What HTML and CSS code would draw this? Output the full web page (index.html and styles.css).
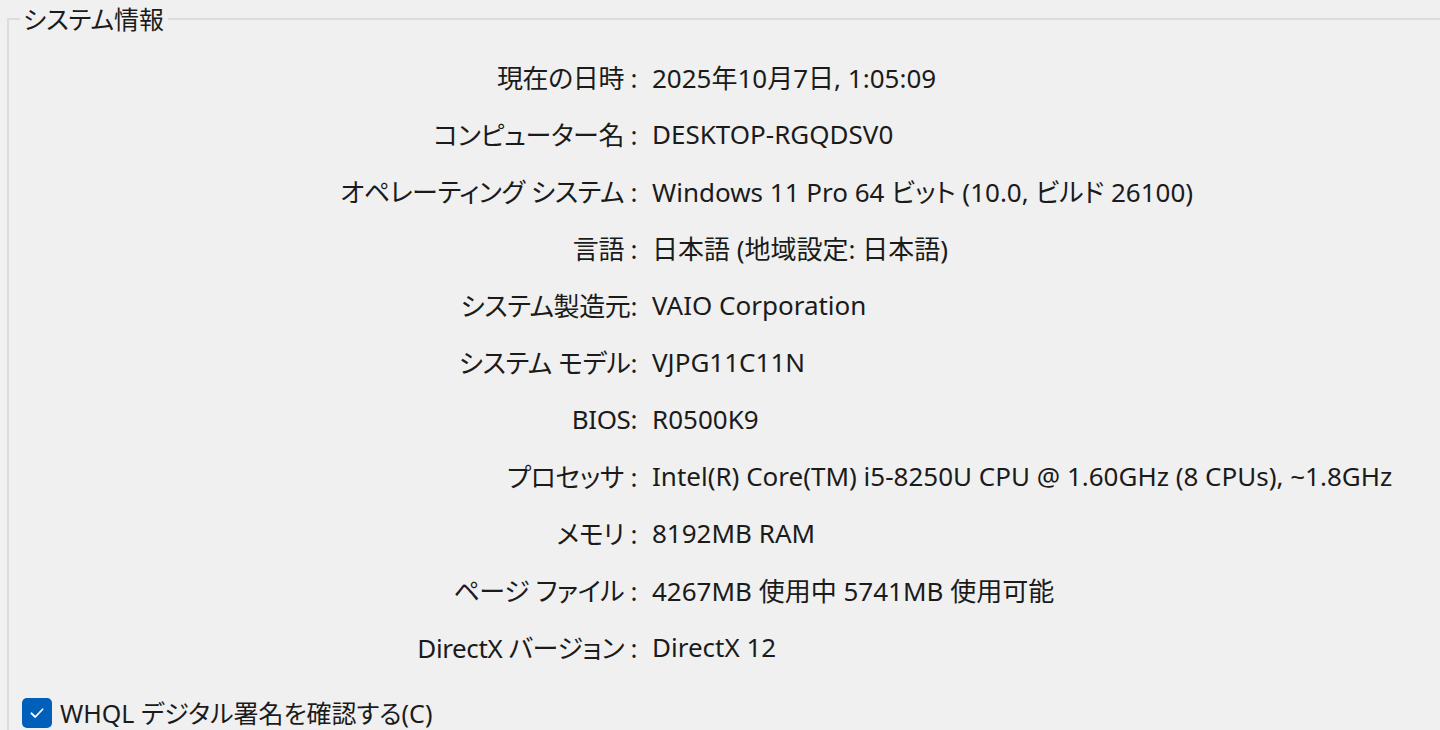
FILE: index.html
```html
<!DOCTYPE html>
<html lang="ja">
<head>
    <meta charset="UTF-8">
    <meta name="viewport" content="width=device-width, initial-scale=1.0">
    <title>システム情報</title>
    <link rel="stylesheet" href="styles.css">
</head>
<body>
    <fieldset class="sys-group">
        <legend class="sys-legend">システム情報</legend>
        <div class="info-grid">
            <div class="info-label">現在の日時 :</div>
            <div class="info-value">2025年10月7日, 1:05:09</div>

            <div class="info-label">コンピューター名 :</div>
            <div class="info-value">DESKTOP-RGQDSV0</div>

            <div class="info-label">オペレーティング システム :</div>
            <div class="info-value">Windows 11 Pro 64 ビット (10.0, ビルド 26100)</div>

            <div class="info-label">言語 :</div>
            <div class="info-value">日本語 (地域設定: 日本語)</div>

            <div class="info-label">システム製造元:</div>
            <div class="info-value">VAIO Corporation</div>

            <div class="info-label">システム モデル:</div>
            <div class="info-value">VJPG11C11N</div>

            <div class="info-label">BIOS:</div>
            <div class="info-value">R0500K9</div>

            <div class="info-label">プロセッサ :</div>
            <div class="info-value">Intel(R) Core(TM) i5-8250U CPU @ 1.60GHz (8 CPUs), ~1.8GHz</div>

            <div class="info-label">メモリ :</div>
            <div class="info-value">8192MB RAM</div>

            <div class="info-label">ページ ファイル :</div>
            <div class="info-value">4267MB 使用中 5741MB 使用可能</div>

            <div class="info-label">DirectX バージョン :</div>
            <div class="info-value">DirectX 12</div>
        </div>

        <label class="whql-check">
            <span class="check-box">
                <svg width="16" height="16" viewBox="0 0 16 16"><path d="M3.5 8.2 L6.6 11.2 L12.5 5" fill="none" stroke="#fff" stroke-width="1.4" stroke-linecap="round" stroke-linejoin="round"/></svg>
            </span>
            <span>WHQL デジタル署名を確認する(C)</span>
        </label>
    </fieldset>
</body>
</html>
```

FILE: styles.css
```css
/* 全体 */
* {
    box-sizing: border-box;
    margin: 0;
    padding: 0;
}
html, body {
    height: 100%;
    overflow: hidden;
}
body {
    background: #f0f0f0;
    color: #1b1b1b;
    font-family: "Noto Sans", "Noto Sans CJK JP", sans-serif;
    font-size: 26px;
    font-feature-settings: "palt";
}

/* グループボックス */
.sys-group {
    margin: 4px 0 0 7px;
    border: none;
    border-top: 2px solid #dcdcdc;
    border-left: 2px solid #dcdcdc;
    height: 760px;
    padding: 0;
}
.sys-legend {
    margin-left: 11px;
    padding: 0 4px 0 3px;
    font-size: 25px;
    line-height: 30px;
}

/* 情報の行 */
.info-grid {
    display: grid;
    grid-template-columns: 628px auto;
    column-gap: 15px;
    grid-auto-rows: 57px;
    align-items: center;
    margin-top: 14px;
}
.info-label {
    text-align: right;
    white-space: nowrap;
    letter-spacing: -0.4px;
}
.info-value {
    white-space: nowrap;
}

/* チェックボックス */
.whql-check {
    display: flex;
    align-items: center;
    gap: 8px;
    margin: 23px 0 0 13px;
    font-size: 25px;
    line-height: 30px;
}
.check-box {
    width: 30px;
    height: 30px;
    border-radius: 5px;
    background: #005fb8;
    display: flex;
    align-items: center;
    justify-content: center;
}
.check-box svg {
    width: 20px;
    height: 20px;
}
```
